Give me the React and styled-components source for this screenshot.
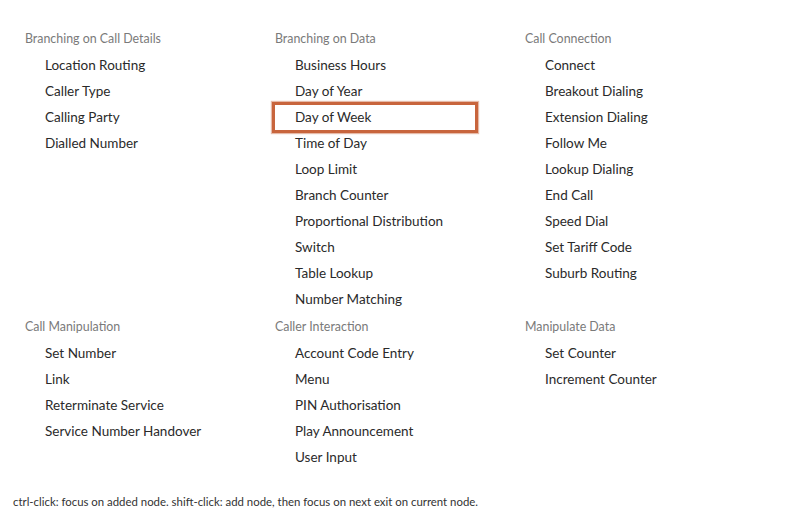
import React from 'react';
import styled, { createGlobalStyle } from 'styled-components';

const GlobalStyle = createGlobalStyle`
  html, body {
    margin: 0;
    background: #fff;
    font-family: Lato, "Open Sans", sans-serif;
  }
`;

const Page = styled.div`
  width: 800px;
  height: 520px;
  display: flex;
  flex-direction: column;
  box-sizing: border-box;
`;

const Grid = styled.div`
  display: grid;
  grid-template-columns: repeat(3, 250px);
  row-gap: 7px;
  padding: 31px 0 0 25px;
`;

const Section = styled.div`
  display: flex;
  flex-direction: column;
`;

const Heading = styled.div`
  font-size: 12.4px;
  line-height: 16px;
  color: #7a7a7a;
  margin-bottom: 5px;
`;

const Item = styled.div`
  position: relative;
  width: 206px;
  height: 26px;
  line-height: 26px;
  margin-left: -3px;
  padding-left: 23px;
  box-sizing: border-box;
  font-size: 13.5px;
  color: #2a2a2a;

  ${(p) =>
    p.$selected &&
    `
    &::after {
      content: '';
      position: absolute;
      top: -2px;
      bottom: -3px;
      left: 0;
      right: 0;
      border: 3px solid #c8653d;
      box-shadow: 0 0 1px 1px rgba(200, 101, 61, 0.45);
    }
  `}
`;

const Footer = styled.div`
  margin-top: auto;
  padding: 0 0 11px 13px;
  font-size: 11.4px;
  line-height: 14px;
  color: #333;
`;

const sections = [
  {
    title: 'Branching on Call Details',
    items: ['Location Routing', 'Caller Type', 'Calling Party', 'Dialled Number']
  },
  {
    title: 'Branching on Data',
    items: [
      'Business Hours',
      'Day of Year',
      'Day of Week',
      'Time of Day',
      'Loop Limit',
      'Branch Counter',
      'Proportional Distribution',
      'Switch',
      'Table Lookup',
      'Number Matching'
    ]
  },
  {
    title: 'Call Connection',
    items: [
      'Connect',
      'Breakout Dialing',
      'Extension Dialing',
      'Follow Me',
      'Lookup Dialing',
      'End Call',
      'Speed Dial',
      'Set Tariff Code',
      'Suburb Routing'
    ]
  },
  {
    title: 'Call Manipulation',
    items: ['Set Number', 'Link', 'Reterminate Service', 'Service Number Handover']
  },
  {
    title: 'Caller Interaction',
    items: ['Account Code Entry', 'Menu', 'PIN Authorisation', 'Play Announcement', 'User Input']
  },
  {
    title: 'Manipulate Data',
    items: ['Set Counter', 'Increment Counter']
  }
];

const App = () => {
  const selected = 'Day of Week';

  return (
    <>
      <GlobalStyle />
      <Page>
        <Grid>
          {sections.map((section) => (
            <Section key={section.title}>
              <Heading>{section.title}</Heading>
              {section.items.map((item) => (
                <Item key={item} $selected={item === selected}>
                  {item}
                </Item>
              ))}
            </Section>
          ))}
        </Grid>
        <Footer>ctrl-click: focus on added node. shift-click: add node, then focus on next exit on current node.</Footer>
      </Page>
    </>
  );
};

export default App;
